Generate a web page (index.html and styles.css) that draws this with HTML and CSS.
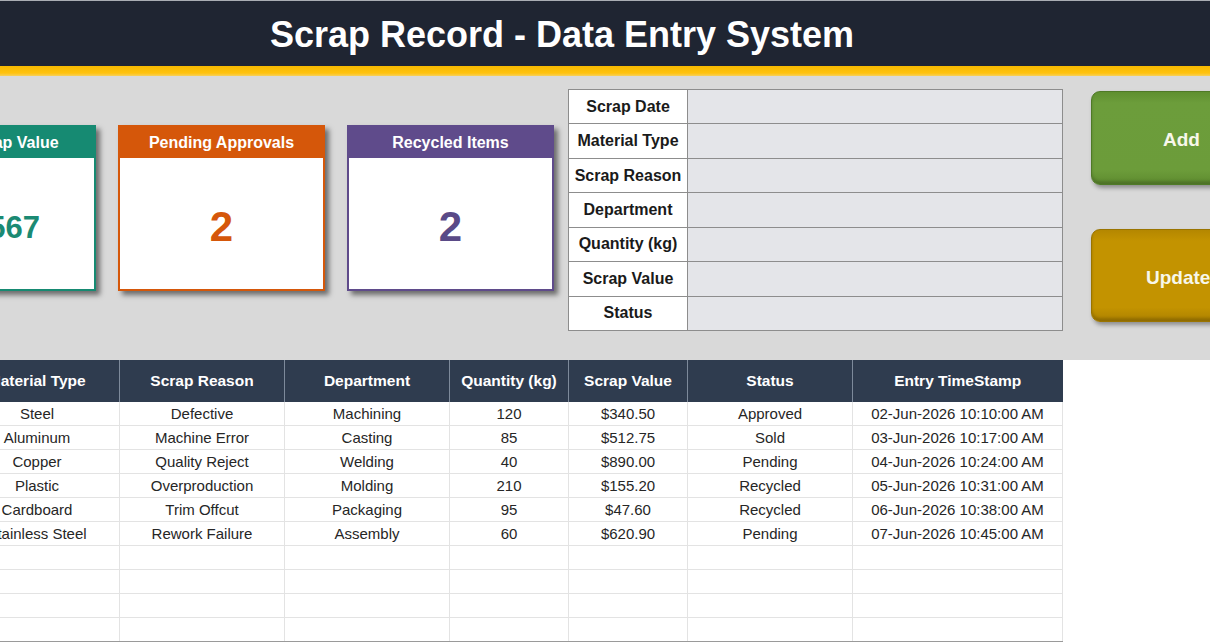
FILE: index.html
```html
<!DOCTYPE html>
<html lang="en">
<head>
<meta charset="utf-8">
<title>Scrap Record - Data Entry System</title>
<link rel="stylesheet" href="styles.css">
</head>
<body>
<div class="app">
  <header class="title-bar"><h1 class="title">Scrap Record - Data Entry System</h1></header>
  <div class="accent"></div>
  <section class="panel">
    <div class="cards">
      <div class="card card-teal">
        <div class="card-head">Total Scrap Value</div>
        <div class="card-value">$2,567</div>
      </div>
      <div class="card card-orange">
        <div class="card-head">Pending Approvals</div>
        <div class="card-value">2</div>
      </div>
      <div class="card card-purple">
        <div class="card-head">Recycled Items</div>
        <div class="card-value">2</div>
      </div>
    </div>
    <table class="form">
      <tr><th>Scrap Date</th><td></td></tr>
      <tr><th>Material Type</th><td></td></tr>
      <tr><th>Scrap Reason</th><td></td></tr>
      <tr><th>Department</th><td></td></tr>
      <tr><th>Quantity (kg)</th><td></td></tr>
      <tr><th>Scrap Value</th><td></td></tr>
      <tr><th>Status</th><td></td></tr>
    </table>
    <div class="buttons">
      <button class="btn btn-add">Add</button>
      <button class="btn btn-update">Update</button>
    </div>
  </section>
  <table class="records">
    <colgroup>
      <col class="w165"><col class="w165"><col class="w165"><col class="w119"><col class="w119"><col class="w165"><col class="w210">
    </colgroup>
    <thead>
      <tr><th>Material Type</th><th>Scrap Reason</th><th>Department</th><th>Quantity (kg)</th><th>Scrap Value</th><th>Status</th><th>Entry TimeStamp</th></tr>
    </thead>
    <tbody>
      <tr><td>Steel</td><td>Defective</td><td>Machining</td><td>120</td><td>$340.50</td><td>Approved</td><td>02-Jun-2026 10:10:00 AM</td></tr>
      <tr><td>Aluminum</td><td>Machine Error</td><td>Casting</td><td>85</td><td>$512.75</td><td>Sold</td><td>03-Jun-2026 10:17:00 AM</td></tr>
      <tr><td>Copper</td><td>Quality Reject</td><td>Welding</td><td>40</td><td>$890.00</td><td>Pending</td><td>04-Jun-2026 10:24:00 AM</td></tr>
      <tr><td>Plastic</td><td>Overproduction</td><td>Molding</td><td>210</td><td>$155.20</td><td>Recycled</td><td>05-Jun-2026 10:31:00 AM</td></tr>
      <tr><td>Cardboard</td><td>Trim Offcut</td><td>Packaging</td><td>95</td><td>$47.60</td><td>Recycled</td><td>06-Jun-2026 10:38:00 AM</td></tr>
      <tr><td>Stainless Steel</td><td>Rework Failure</td><td>Assembly</td><td>60</td><td>$620.90</td><td>Pending</td><td>07-Jun-2026 10:45:00 AM</td></tr>
      <tr><td></td><td></td><td></td><td></td><td></td><td></td><td></td></tr>
      <tr><td></td><td></td><td></td><td></td><td></td><td></td><td></td></tr>
      <tr><td></td><td></td><td></td><td></td><td></td><td></td><td></td></tr>
      <tr><td></td><td></td><td></td><td></td><td></td><td></td><td></td></tr>
    </tbody>
  </table>
</div>
</body>
</html>
```
FILE: styles.css
```css
html, body {
  margin: 0;
  padding: 0;
  background: #ffffff;
}
body {
  width: 1210px;
  height: 642px;
  overflow: hidden;
  font-family: "Liberation Sans", Arial, sans-serif;
  color: #262626;
}
.app {
  width: 1210px;
}
.title-bar {
  height: 65px;
  border-top: 1px solid #a9adb3;
  background: #1f2532;
  display: flex;
  align-items: center;
  justify-content: center;
  padding-right: 86px;
}
.title {
  margin: 0;
  font-size: 36px;
  font-weight: bold;
  color: #ffffff;
  padding-top: 2px;
}
.accent {
  height: 10px;
  background: linear-gradient(#f6b900, #ffc20e 70%, #f7d05a);
}
.panel {
  height: 284px;
  background: #d9d9d9;
  display: flex;
  align-items: flex-start;
}
.cards {
  flex: none;
  display: flex;
  gap: 22px;
  margin-left: -111px;
  margin-top: 49px;
}
.card {
  width: 203px;
  height: 162px;
  background: #ffffff;
  border: 2px solid;
  box-shadow: 4px 4px 5px rgba(0, 0, 0, 0.5);
  display: flex;
  flex-direction: column;
}
.card-head {
  height: 31px;
  display: flex;
  align-items: center;
  justify-content: center;
  color: #ffffff;
  font-weight: bold;
  font-size: 16px;
}
.card-value {
  flex: 1;
  display: flex;
  align-items: center;
  justify-content: center;
  font-weight: bold;
  font-size: 42px;
  padding-top: 6px;
}
.card-teal { border-color: #168a72; }
.card-teal .card-head { background: #168a72; }
.card-teal .card-value { color: #1b8a73; font-size: 31px; padding-top: 9px; }
.card-orange { border-color: #d5570a; }
.card-orange .card-head { background: #d5570a; }
.card-orange .card-value { color: #d5570a; }
.card-purple { border-color: #5f4b8b; }
.card-purple .card-head { background: #5f4b8b; }
.card-purple .card-value { color: #5a4a87; }

.form {
  flex: none;
  margin-left: 14px;
  margin-top: 13px;
  width: 495px;
  height: 242px;
  border-collapse: collapse;
}
.form th, .form td {
  border: 1px solid #8d8d8d;
  padding: 0;
}
.form th {
  width: 118px;
  background: #ffffff;
  color: #1a1a1a;
  font-size: 16px;
  font-weight: bold;
  text-align: center;
}
.form td {
  background: #e4e5e9;
}
.buttons {
  flex: none;
  margin-left: 28px;
  margin-top: 15px;
  display: flex;
  flex-direction: column;
  gap: 44px;
}
.btn {
  width: 180px;
  height: 94px;
  border-radius: 9px;
  font-family: "Liberation Sans", Arial, sans-serif;
  font-size: 19px;
  font-weight: bold;
  color: #f7f7ea;
  text-align: left;
  padding-top: 5px;
  box-shadow: 2px 3px 4px rgba(0, 0, 0, 0.35), inset 0 -3px 3px rgba(0, 0, 0, 0.18);
}
.btn-add {
  background: linear-gradient(#5f8f30, #6c9d3b 12%, #6c9c3a 85%, #5e8b2f);
  border: 1px solid #4f7a27;
  padding-left: 71px;
}
.btn-update {
  background: linear-gradient(#b48700, #c39300 12%, #c39300 85%, #ad8200);
  border: 1px solid #9a7400;
  padding-left: 54px;
  height: 93px;
}

.records {
  margin-left: -46px;
  width: 1108px;
  table-layout: fixed;
  border-collapse: collapse;
}
.w165 { width: 165px; }
.w119 { width: 119px; }
.w210 { width: 210px; }
.records th {
  height: 42px;
  padding: 0;
  background: #2f3c4f;
  color: #ffffff;
  font-size: 15.5px;
  font-weight: bold;
  text-align: center;
  border-right: 1px solid #7d8a9b;
}
.records th:last-child {
  border-right: none;
}
.records td {
  height: 23px;
  padding: 0;
  font-size: 15px;
  text-align: center;
  border: 1px solid #e3e3e3;
  white-space: nowrap;
}
.records tbody tr:first-child td {
  border-top: none;
}
.records tbody tr:last-child td {
  border-bottom: 1px solid #9a9a9a;
}
```
